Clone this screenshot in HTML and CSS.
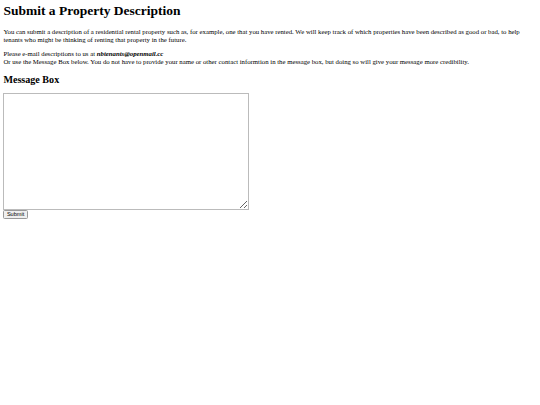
FILE: index.html
```html
<!DOCTYPE html>
<html lang="en">
<head>
  <meta charset="UTF-8">
  <title>Submit a Property Description</title>
  <link rel="stylesheet" href="styles.css">
</head>
<body>
  <h1>Submit a Property Description</h1>
  <p>You can submit a description of a residential rental property such as, for example, one that you have rented. We will keep track of which properties have been described as good or bad, to help tenants who might be thinking of renting that property in the future.</p>
  <p>Please e-mail descriptions to us at <b><i>nbtenants@openmail.cc</i></b><br>
  Or use the Message Box below. You do not have to provide your name or other contact informtion in the message box, but doing so will give your message more credibility.</p>

  <h2>Message Box</h2>
  <form class="message-form">
    <textarea class="message" name="message"></textarea>
    <button type="button" class="submit">Submit</button>
  </form>
</body>
</html>
```

FILE: styles.css
```css
body {
  font-family: "Liberation Serif", "Times New Roman", serif;
  color: #000;
  background: #fff;
  margin: 3.4px;
  font-size: 6.75px;
  line-height: 8px;
}
h1 {
  font-size: 13.5px;
  line-height: 15.5px;
  margin: 0 0 8.8px;
}
p {
  margin: 6.75px 0;
}
h2 {
  font-size: 10.1px;
  line-height: 11.6px;
  margin: 7.8px 0 7.2px;
}
.message-form {
  display: flex;
  flex-direction: column;
  align-items: flex-start;
}
.message {
  width: 246px;
  height: 117px;
  box-sizing: border-box;
  border: 1px solid #bbb;
  margin: 0;
  padding: 1px;
  resize: both;
  font-family: "Liberation Mono", monospace;
  font-size: 5.6px;
}
.submit {
  font-family: "Liberation Sans", Arial, sans-serif;
  font-size: 5.6px;
  line-height: 6.5px;
  margin: 0;
  padding: 0 2.5px;
  border: 1px solid #999;
  border-radius: 1.5px;
  background: #efefef;
  color: #000;
}
```
